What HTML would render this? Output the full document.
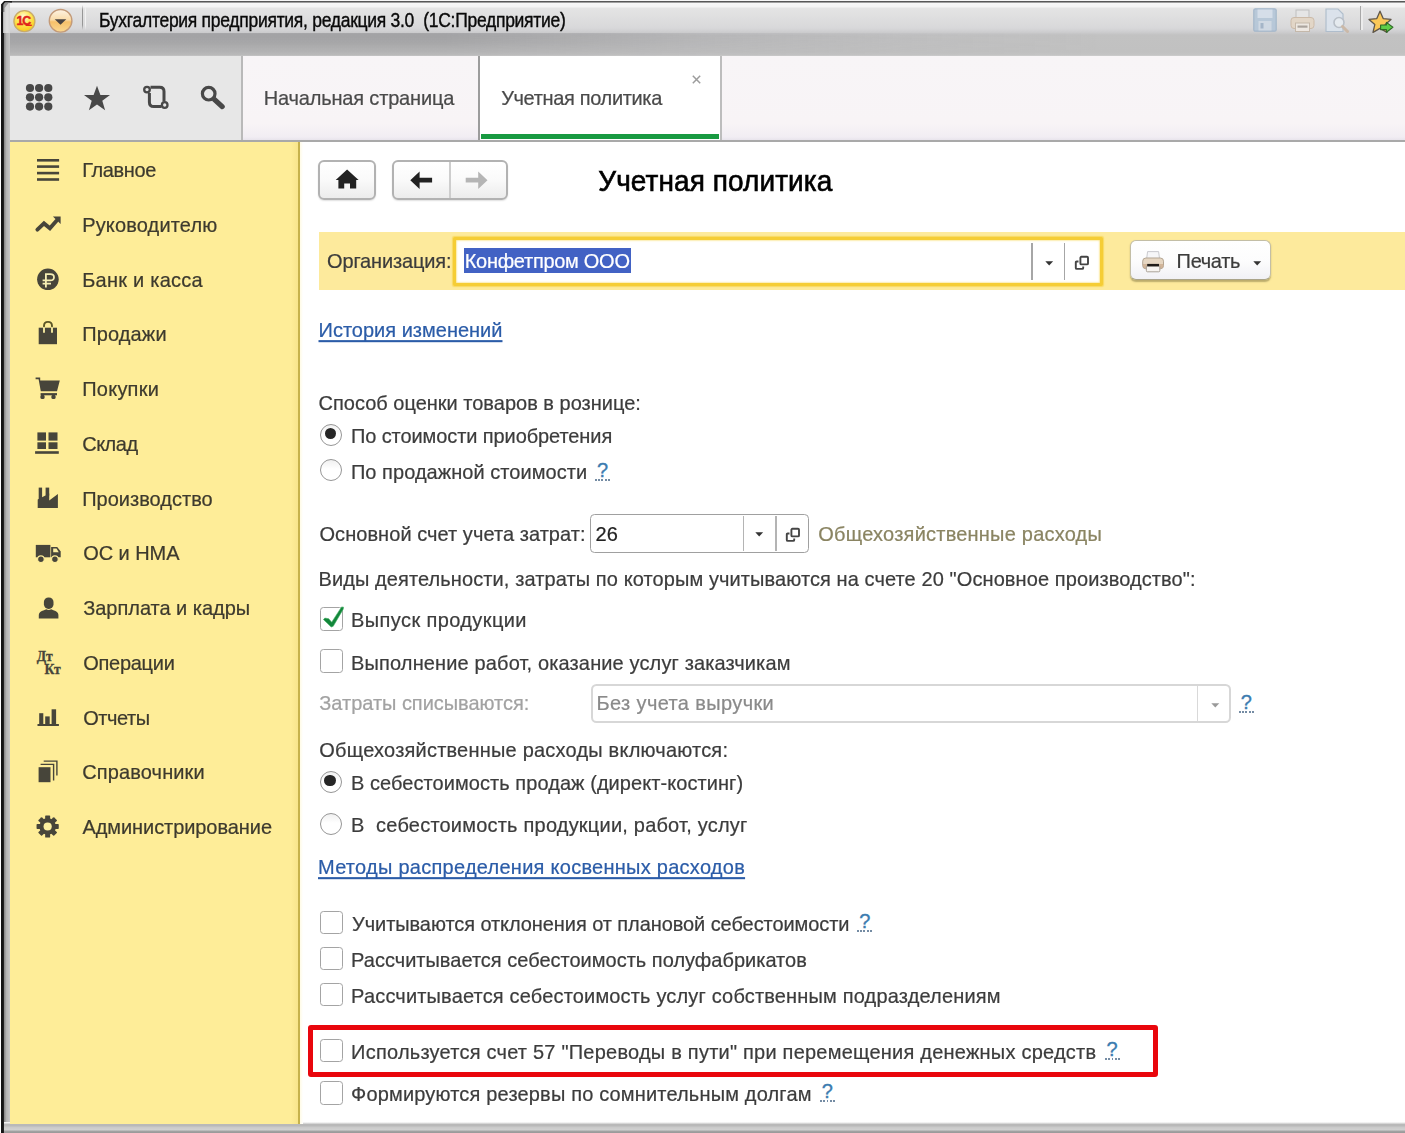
<!DOCTYPE html>
<html lang="ru">
<head>
<meta charset="utf-8">
<title>Учетная политика</title>
<style>
html,body{margin:0;padding:0;}
body{width:1405px;height:1133px;overflow:hidden;position:relative;background:#fff;font-family:"Liberation Sans",sans-serif;font-size:20px;color:#3c3c3c;}
.a{position:absolute;}
svg{position:absolute;overflow:visible;}
.t{position:absolute;white-space:nowrap;font-size:20px;line-height:24px;color:#3c3c3c;-webkit-text-stroke:0.22px currentColor;}
.lnk{text-decoration:underline;text-decoration-skip-ink:none;text-underline-offset:3px;text-decoration-thickness:2.3px;}
.qm{color:#3c7cb0;-webkit-text-stroke:0.35px #3c7cb0;}
.qd{width:15px;height:1.9px;background:repeating-linear-gradient(90deg,#758ca4 0,#758ca4 1.9px,transparent 1.9px,transparent 3.25px);}
.cb{position:absolute;width:23.5px;height:23.4px;border:1.8px solid #a4a4a4;border-radius:3.4px;background:#fff;box-sizing:border-box;}
.rb{position:absolute;width:22.1px;height:22.1px;border:1.9px solid #969696;border-radius:50%;background:linear-gradient(#f0f0f0,#ffffff 45%);box-sizing:border-box;}
.rb.on::after{content:"";position:absolute;left:3.4px;top:3.4px;width:11.5px;height:11.5px;border-radius:50%;background:#262626;}
.btn{position:absolute;box-sizing:border-box;border:2px solid #b2b2b2;border-radius:6px;background:linear-gradient(#ffffff,#fafafa 50%,#ececec);box-shadow:0 1px 1.5px rgba(0,0,0,.12);}
#h1{-webkit-text-stroke:0.6px #000;}
#wtitle{-webkit-text-stroke:0.35px #0a0a0a;}
</style>
</head>
<body>
<!-- ===== window frame / title bar ===== -->
<div class="a" id="titlebar" style="left:0;top:0;width:1405px;height:56px;background:linear-gradient(#f6f6f6 0px,#f6f6f6 0.9px,#555555 1.3px,#5e5e5e 2.2px,#f7f7f7 2.9px,#f4f4f4 6.5px,#e4e4e4 8.5px,#d8d8da 28px,#cdcdcf 32px,#c2c2c2 35px,#c1c1c1 52px,#c4c4c4 55px,#d0d0d0 56px);"></div>
<div class="a" id="titleshade" style="left:4px;top:33px;width:1401px;height:22.500px;background:linear-gradient(90deg,rgba(100,100,106,.34) 0,rgba(100,100,106,.34) 440px,rgba(120,120,130,.16) 700px,rgba(130,130,150,.05) 900px,rgba(130,130,150,0) 1100px);-webkit-mask-image:linear-gradient(#000 0,rgba(0,0,0,.85) 40%,rgba(0,0,0,.25) 100%);mask-image:linear-gradient(#000 0,rgba(0,0,0,.85) 40%,rgba(0,0,0,.25) 100%);"></div>
<div class="a" id="leftframe" style="left:0;top:0;width:10px;height:1133px;background:linear-gradient(90deg,#ffffff 0px,#ffffff 0.8px,#141414 1.4px,#141414 3.4px,#8a8a8a 4.4px,#b4b4b4 6.5px,#c6c6c6 10px);"></div>
<div class="a" id="leftframetop" style="left:3.400px;top:3px;width:7px;height:30px;background:linear-gradient(90deg,#a8a8a8 0,#cfcfcf 1.500px,#dedede 4px,rgba(225,225,225,.6) 7px);"></div>
<div class="a" id="bottomframe" style="left:3.500px;top:1122px;width:1402px;height:11px;background:linear-gradient(#ffffff 0px,#e4e4e4 1px,#b9b9b9 2.5px,#b9b9b9 4px,#c9c9c9 5px,#d1d1d1 8px,#a4a4a4 9px,#989898 11px);"></div>
<svg style="left:0;top:0;" width="12" height="12" viewBox="0 0 12 12"><path d="M0 0H12V1H4.500L1.200 4.500V12H0Z" fill="#fff"/><path d="M1.200 12V4.200L4.200 1.100H12V2.500H5L3.500 4.800V12Z" fill="#1c1c1c"/><path d="M3.500 12V4.800L5 2.500H9L4.500 8V12Z" fill="#8a8a8a" opacity=".8"/></svg>

<!-- 1C logo -->
<svg style="left:11px;top:8px;" width="27" height="27" viewBox="0 0 27 27">
<defs><radialGradient id="g1c" cx="45%" cy="30%" r="78%"><stop offset="0" stop-color="#fffce0"/><stop offset=".42" stop-color="#ffe85a"/><stop offset=".8" stop-color="#fbd024"/><stop offset="1" stop-color="#e6c84a"/></radialGradient></defs>
<circle cx="13.400" cy="13.200" r="10.500" fill="url(#g1c)" stroke="#c9ab6b" stroke-width="1.300"/>
<text x="5.600" y="17" font-family="Liberation Sans" font-weight="bold" font-size="12.300" fill="#e0251b" stroke="#e0251b" stroke-width=".5" letter-spacing="-1.100">1С</text>
<path d="M14.600 17.300H20.800" stroke="#e0251b" stroke-width="1.400"/>
</svg>
<!-- round dropdown button -->
<svg style="left:46px;top:6px;" width="29" height="29" viewBox="0 0 29 29">
<defs><linearGradient id="gdd" x1="0" y1="0" x2="0" y2="1"><stop offset="0" stop-color="#fdf3e4"/><stop offset=".45" stop-color="#fadcaa"/><stop offset=".55" stop-color="#f6c06a"/><stop offset="1" stop-color="#fad892"/></linearGradient></defs>
<circle cx="14.600" cy="14.800" r="11.300" fill="url(#gdd)" stroke="#c39a78" stroke-width="1.400"/>
<path d="M8.700 13.200H20.300L14.500 18.700Z" fill="#4a4442"/>
</svg>
<div class="a" style="left:81.800px;top:5px;width:1.600px;height:25px;background:linear-gradient(rgba(140,140,140,0),#969696 20%,#969696 80%,rgba(140,140,140,0));"></div>
<div class="a" style="left:84.800px;top:5px;width:1.500px;height:25px;background:linear-gradient(rgba(255,255,255,0),#f2f2f2 20%,#f2f2f2 80%,rgba(255,255,255,0));"></div>

<!-- title bar right icons (disabled look) -->
<svg style="left:1253px;top:8px;opacity:.9" width="24" height="24" viewBox="0 0 24 24">
<rect x=".8" y=".8" width="22.400" height="22.400" rx="1.500" fill="#b4c6d8" stroke="#9fb4c9" stroke-width="1.200"/>
<rect x="4.500" y="1.500" width="15" height="8.500" fill="#d4deea"/><rect x="5.500" y="13" width="13" height="9.500" fill="#cfd9e4"/><rect x="7.500" y="15" width="3" height="5.500" fill="#9fb2c6"/>
</svg>
<svg style="left:1290px;top:9px;opacity:.95" width="25" height="24" viewBox="0 0 25 24">
<rect x="6" y="1" width="13" height="9" fill="#e6e6e6" stroke="#bdbdbd" stroke-width="1"/>
<rect x="1" y="8.500" width="23" height="11" rx="3" fill="#e3d6c6" stroke="#cbb9a6" stroke-width="1"/>
<rect x="5.500" y="14" width="14" height="8.500" fill="#efe9e2" stroke="#c4b7a8" stroke-width="1"/>
<rect x="7.500" y="16.500" width="10" height="2.200" fill="#a9a29a"/>
</svg>
<svg style="left:1325px;top:8px;opacity:.95" width="24" height="25" viewBox="0 0 24 25">
<path d="M1 1H13L18 6V23.500H1Z" fill="#dbe3ec" stroke="#aebdcc" stroke-width="1.200"/>
<circle cx="14" cy="14.500" r="5" fill="#e6ebf0" stroke="#b7bec6" stroke-width="1.600"/>
<path d="M17.500 18.500L22.500 23.500" stroke="#cbb8a6" stroke-width="3" stroke-linecap="round"/>
</svg>
<div class="a" style="left:1359.500px;top:6px;width:1.500px;height:24px;background:#a8a8a8;"></div>
<div class="a" style="left:1361px;top:6px;width:1.500px;height:24px;background:#ececec;"></div>
<svg style="left:1368px;top:10px;" width="27" height="25" viewBox="0 0 27 25">
<path d="M12 1.200L15.200 8.600L23 9.400L17.200 14.600L19 22.400L12 18.400L5 22.400L6.800 14.600L1 9.400L8.800 8.600Z" fill="#fbc858" stroke="#5e564a" stroke-width="1.300" stroke-linejoin="round"/>
<path d="M12.600 15H18.400V12.400L24.900 17.300L18.400 22.200V19.600H12.600Z" fill="#5fce48" stroke="#2f6a26" stroke-width="1.100" stroke-linejoin="round"/>
</svg>

<!-- ===== tab bar ===== -->
<div class="a" id="tabbar" style="left:10px;top:56px;width:1395px;height:84px;background:linear-gradient(#f8f5f7 0,#f8f4f6 68px,#f1edf3 81px,#e8e4ec 84px);"></div>
<div class="a" style="left:10px;top:56px;width:231px;height:84px;background:#e7e7e7;"></div>
<div class="a" style="left:241px;top:56px;width:1.600px;height:84px;background:#b9b9b9;"></div>
<div class="a" style="left:478.300px;top:56px;width:1.700px;height:84px;background:#9c9c9c;"></div>
<div class="a" id="tabactive" style="left:480.400px;top:56px;width:239.600px;height:84px;background:#fff;"></div>
<div class="a" style="left:720px;top:56px;width:1.600px;height:84px;background:#bdbdbd;"></div>
<div class="a" style="left:480.700px;top:134.400px;width:238px;height:4.200px;background:#189a41;"></div>
<div class="a" style="left:10px;top:139.800px;width:1395px;height:1.800px;background:#a9a9a9;"></div>
<svg style="left:691.500px;top:74.500px;" width="9" height="9" viewBox="0 0 9 9"><path d="M.8.8L8.200 8.200M8.200.8L.8 8.200" stroke="#9c9c9c" stroke-width="1.500"/></svg>

<!-- tab bar icons -->
<svg style="left:25px;top:83px;" width="29" height="29" viewBox="0 0 29 29" fill="#484848">
<circle cx="5" cy="5" r="4.100"/><circle cx="14.100" cy="5" r="4.100"/><circle cx="23.300" cy="5" r="4.100"/>
<circle cx="5" cy="14.300" r="4.100"/><circle cx="14.100" cy="14.300" r="4.100"/><circle cx="23.300" cy="14.300" r="4.100"/>
<circle cx="5" cy="23.600" r="4.100"/><circle cx="14.100" cy="23.600" r="4.100"/><circle cx="23.300" cy="23.600" r="4.100"/>
</svg>
<svg style="left:83px;top:85px;" width="28" height="27" viewBox="0 0 28 27"><path d="M14 .8L17.400 9.900H27L19.300 15.700L22.100 25.200L14 19.600L5.900 25.200L8.700 15.700L1 9.900H10.600Z" fill="#484848"/></svg>
<svg style="left:142px;top:84px;" width="28" height="27" viewBox="0 0 28 27" fill="none" stroke="#484848" stroke-width="3">
<path d="M7.400 9V18.300Q7.400 22.600 11.700 22.600H19.500"/>
<path d="M8.500 3.300H17.700Q22 3.300 22 7.600V17.500"/>
<circle cx="5" cy="5.600" r="2.800" fill="#e7e7e7" stroke-width="2.300"/>
<circle cx="22.700" cy="21" r="2.800" fill="#e7e7e7" stroke-width="2.300"/>
</svg>
<svg style="left:199px;top:84px;" width="28" height="27" viewBox="0 0 28 27" fill="none" stroke="#484848">
<circle cx="9.700" cy="9.700" r="6.300" stroke-width="3.200"/><path d="M15.300 15.300L23.200 22.600" stroke-width="5.200" stroke-linecap="round"/>
</svg>

<!-- ===== sidebar ===== -->
<div class="a" id="sidebar" style="left:10px;top:141.600px;width:288px;height:982px;background:linear-gradient(90deg,#feed98 0,#feed98 281px,#f8e58c 288px);"></div>
<div class="a" style="left:297.600px;top:141.600px;width:2px;height:982px;background:#c6b24c;"></div>
<div class="a" style="left:299.600px;top:141.600px;width:3px;height:982px;background:linear-gradient(90deg,#fffbe6,#ffffff);"></div>

<!-- 0 Главное -->
<svg style="left:36.800px;top:158.900px;" width="23" height="22" viewBox="0 0 23 22" fill="#47453a"><rect x="0" y="0" width="22.100" height="2.600"/><rect x="0" y="6.300" width="22.100" height="2.600"/><rect x="0" y="12.800" width="22.100" height="2.600"/><rect x="0" y="19.200" width="22.100" height="2.600"/></svg>
<!-- 1 Руководителю -->
<svg style="left:35px;top:216px;" width="27" height="16" viewBox="0 0 27 16"><path d="M2.400 13.700L9 7.400L14.900 12.200L21.500 4.800" fill="none" stroke="#47453a" stroke-width="3.900" stroke-linejoin="miter" stroke-linecap="round"/><path d="M17.900 .6H25.600V8Z" fill="#47453a"/></svg>
<!-- 2 Банк и касса -->
<svg style="left:36px;top:267.500px;" width="23" height="23" viewBox="0 0 23 23"><circle cx="11.900" cy="11.300" r="10.800" fill="#47453a"/><path d="M9.900 19.400V6.200H14.300Q18 6.200 18 9.300T14.300 12.400H6.600M6.600 15.700H15" fill="none" stroke="#f5eeb4" stroke-width="1.800"/></svg>
<!-- 3 Продажи -->
<svg style="left:38px;top:321px;" width="21" height="24" viewBox="0 0 21 24"><path d="M.7 6.700H19V23.200H.7Z" fill="#47453a"/><path d="M6 7V5Q6 .9 10 .9T14 5V7" fill="none" stroke="#5c5626" stroke-width="1.900"/><path d="M6 6.700V11M14 6.700V11" stroke="#f5eaa0" stroke-width="1.900" stroke-linecap="round"/></svg>
<!-- 4 Покупки -->
<svg style="left:35px;top:377px;" width="26" height="23" viewBox="0 0 26 23" fill="#47453a"><path d="M.6 .4H5.200V3.500H24.800L22 14.200H5.800L3.600 2.300H.6Z"/><rect x="5.600" y="16.100" width="16.400" height="2.200"/><rect x="5.400" y="17.800" width="4.200" height="4.300" rx="1.600"/><rect x="16.400" y="17.800" width="4.200" height="4.300" rx="1.600"/></svg>
<!-- 5 Склад -->
<svg style="left:35px;top:432px;" width="24" height="23" viewBox="0 0 24 23" fill="#47453a"><rect x="2.400" y=".4" width="8.600" height="8.200"/><rect x="13.500" y=".4" width="9" height="8.200"/><rect x="2.400" y="10.300" width="8.600" height="6.700"/><rect x="13.500" y="10.300" width="9" height="6.700"/><rect x=".1" y="19.200" width="23.700" height="2.600"/></svg>
<!-- 6 Производство -->
<svg style="left:37px;top:487px;" width="22" height="22" viewBox="0 0 22 22" fill="#47453a"><rect x="1.700" y=".6" width="3.400" height="12"/><rect x="8.600" y=".6" width="3.600" height="8"/><path d="M.7 21.100V12.500L12.200 6.500V13.400L20.900 7V21.100Z"/></svg>
<!-- 7 ОС и НМА -->
<svg style="left:35px;top:544px;" width="27" height="19" viewBox="0 0 27 19"><path d="M.8 .9H15.400V13.300H.8Z" fill="#47453a"/><path d="M16.100 3H22.200L25.700 7.400V13.300H16.100Z" fill="#47453a"/><path d="M18.200 4.400H21.500L23.800 8.200H18.200Z" fill="#fbeea0"/><circle cx="5.900" cy="15.200" r="3.300" fill="#47453a" stroke="#feed98" stroke-width="1.100"/><circle cx="19.900" cy="15.200" r="3.300" fill="#47453a" stroke="#feed98" stroke-width="1.100"/></svg>
<!-- 8 Зарплата -->
<svg style="left:37.500px;top:596.500px;" width="22" height="22" viewBox="0 0 22 22" fill="#47453a"><rect x="5.900" y=".5" width="9.600" height="11.400" rx="4.600"/><path d="M.8 21.400V17.800Q1.100 14.600 6 13.300L8.200 12.200Q10.700 13.800 13.200 12.200L15.400 13.300Q20.100 14.600 20.400 17.800V21.400Z"/></svg>
<!-- 9 Операции -->
<div class="a" style="left:36.800px;top:650px;font-family:'Liberation Serif',serif;font-weight:bold;font-size:13.600px;line-height:13px;color:#47453a;letter-spacing:-0.2px;-webkit-text-stroke:0.300px #47453a;white-space:nowrap;">Дт</div>
<div class="a" style="left:44.600px;top:662.500px;font-family:'Liberation Serif',serif;font-weight:bold;font-size:13.600px;line-height:13px;color:#47453a;letter-spacing:-0.2px;-webkit-text-stroke:0.300px #47453a;white-space:nowrap;">Кт</div>
<!-- 10 Отчеты -->
<svg style="left:36.500px;top:708.500px;" width="23" height="18" viewBox="0 0 23 18" fill="#47453a"><rect x="2.200" y="4.200" width="4.100" height="11.500"/><rect x="8.200" y="7.400" width="4.500" height="8.500"/><rect x="14.600" y=".3" width="4.500" height="15.500"/><rect x=".5" y="15" width="21.400" height="2"/></svg>
<!-- 11 Справочники -->
<svg style="left:38px;top:760px;" width="21" height="23" viewBox="0 0 21 23"><rect x=".6" y="7.200" width="11.900" height="15" fill="#47453a"/><path d="M2.600 4.400H15.600V20.500M5.700 1.100H18.900V15.600" fill="none" stroke="#47453a" stroke-width="1.400"/></svg>
<!-- 12 Администрирование -->
<svg style="left:36px;top:814.800px;" width="24" height="24" viewBox="0 0 24 24"><g transform="translate(11.650 11.500)" fill="#47453a"><circle r="8.300"/><rect x="-2.500" y="-11.100" width="5" height="4.500" rx=".7" transform="rotate(0)"/><rect x="-2.500" y="-11.100" width="5" height="4.500" rx=".7" transform="rotate(45)"/><rect x="-2.500" y="-11.100" width="5" height="4.500" rx=".7" transform="rotate(90)"/><rect x="-2.500" y="-11.100" width="5" height="4.500" rx=".7" transform="rotate(135)"/><rect x="-2.500" y="-11.100" width="5" height="4.500" rx=".7" transform="rotate(180)"/><rect x="-2.500" y="-11.100" width="5" height="4.500" rx=".7" transform="rotate(225)"/><rect x="-2.500" y="-11.100" width="5" height="4.500" rx=".7" transform="rotate(270)"/><rect x="-2.500" y="-11.100" width="5" height="4.500" rx=".7" transform="rotate(315)"/><circle r="4.100" fill="#fdf0a0"/></g></svg>
<!-- ===== main content : toolbar ===== -->
<div class="btn" style="left:318px;top:160px;width:58px;height:39.500px;"></div>
<div class="btn" style="left:391.600px;top:160px;width:116px;height:39.500px;"></div>
<div class="a" style="left:449.300px;top:162px;width:1.400px;height:35.500px;background:#cdcdcd;"></div>
<svg style="left:335px;top:169px;" width="25" height="20" viewBox="0 0 25 20"><path d="M12.100 .5L23.600 10.900H21.200V19.400H15V14.600H9.200V19.400H3.400V10.900H.7Z" fill="#222"/></svg>
<svg style="left:410px;top:170.500px;" width="23" height="19" viewBox="0 0 23 19"><path d="M.3 9.200L9.600 .4V6.800H22.100V11.600H9.600V18Z" fill="#222"/></svg>
<svg style="left:464.500px;top:170.500px;" width="23" height="19" viewBox="0 0 23 19"><path d="M22.500 9.200L13.200 .4V6.800H.7V11.600H13.200V18Z" fill="#b5b5b5"/></svg>

<!-- organisation band -->
<div class="a" id="orgband" style="left:318.600px;top:232.400px;width:1087px;height:58px;background:#fdea9c;"></div>
<div class="a" id="orginput" style="left:452.600px;top:236.800px;width:650.400px;height:48.800px;box-sizing:border-box;border:3.300px solid #f5cd35;background:#fff;border-radius:2px;box-shadow:0 0 1.200px 0.300px #f9d95e, inset 0 0 1.600px 0.600px #f9e07a;"></div>
<div class="a" id="sel" style="left:464px;top:248px;width:167px;height:24.500px;background:#4262c4;"></div>
<div class="a" style="left:1031.200px;top:243px;width:1.400px;height:36.500px;background:#a6a6a6;"></div>
<div class="a" style="left:1064px;top:243px;width:1.400px;height:36.500px;background:#a6a6a6;"></div>
<svg style="left:1045px;top:260.800px;" width="9" height="5" viewBox="0 0 9 5"><path d="M.3 .2H8.100L4.200 4.400Z" fill="#333"/></svg>
<svg style="left:1074px;top:255px;" width="16" height="16" viewBox="0 0 16 16" fill="none" stroke="#444" stroke-width="1.900"><rect x="6.400" y="1.800" width="7.600" height="7.600" rx="1"/><path d="M4.500 6.500H2.800Q1.800 6.500 1.800 7.500V12.900Q1.800 13.900 2.800 13.900H8.200Q9.200 13.900 9.200 12.900V11.400"/></svg>

<div class="btn" style="left:1130.400px;top:240.400px;width:140.800px;height:39.600px;border:1.500px solid #c3bea6;border-bottom-color:#aaa48a;background:linear-gradient(#ffffff,#fcfcfd 55%,#f1f1f5);box-shadow:0 1.500px 1.500px rgba(95,85,40,.42);"></div>
<svg style="left:1142px;top:250.500px;" width="23" height="22" viewBox="0 0 23 22">
<path d="M5.600 .6H16.600L17.600 8H4.600Z" fill="#f6f6f8" stroke="#c4c4c8" stroke-width=".9"/>
<rect x=".7" y="7" width="20.800" height="10.800" rx="3.200" fill="#e6d6c2" stroke="#b3a593" stroke-width="1"/>
<path d="M.9 13H21.300V14.600Q21.300 17.600 18.300 17.600H3.900Q.9 17.600 .9 14.600Z" fill="#c9a98c" opacity=".75"/>
<rect x="4.400" y="14.800" width="13.400" height="6" rx="1" fill="#f7f4f0" stroke="#a39a8e" stroke-width=".9"/>
<rect x="5.200" y="12.900" width="11.800" height="2.500" fill="#1f1b18"/>
</svg>
<svg style="left:1252.600px;top:260.800px;" width="9" height="5" viewBox="0 0 9 5"><path d="M.3 .2H8.100L4.200 4.400Z" fill="#333"/></svg>

<!-- radios group 1 -->
<div class="rb on" style="left:320.200px;top:423.600px;"></div>
<div class="rb" style="left:320.200px;top:459.300px;"></div>

<!-- account input -->
<div class="a" style="left:590.300px;top:514px;width:218.500px;height:38.500px;box-sizing:border-box;border:1.800px solid #a0a0a0;border-radius:4.500px;background:#fff;"></div>
<div class="a" style="left:742.500px;top:515.500px;width:1.300px;height:35.500px;background:#b4b4b4;"></div>
<div class="a" style="left:775.300px;top:515.500px;width:1.300px;height:35.500px;background:#b4b4b4;"></div>
<svg style="left:755.200px;top:531.500px;" width="9" height="5" viewBox="0 0 9 5"><path d="M.3 .2H8.100L4.200 4.400Z" fill="#333"/></svg>
<svg style="left:784.500px;top:527px;" width="16" height="16" viewBox="0 0 16 16" fill="none" stroke="#444" stroke-width="1.900"><rect x="6.400" y="1.800" width="7.600" height="7.600" rx="1"/><path d="M4.500 6.500H2.800Q1.800 6.500 1.800 7.500V12.900Q1.800 13.900 2.800 13.900H8.200Q9.200 13.900 9.200 12.900V11.400"/></svg>

<!-- checkboxes 1,2 -->
<div class="cb" style="left:319.800px;top:607.200px;"></div>
<svg style="left:320px;top:604px;" width="26" height="26" viewBox="0 0 26 26"><path d="M3.400 15.500L4.900 14.100L8.700 14.700L11.700 18.200L21.600 2.900L23.600 3.200L23.200 5.200L13.200 22.300L11.200 23Z" fill="#12863a" stroke="#3fae62" stroke-width=".6" stroke-linejoin="round"/></svg>
<div class="cb" style="left:319.800px;top:649.300px;"></div>

<!-- disabled select -->
<div class="a" style="left:590.800px;top:683.800px;width:640.200px;height:39.200px;box-sizing:border-box;border:2px solid #d7d7d7;border-radius:5.500px;background:#fff;"></div>
<div class="a" style="left:1196.800px;top:685.500px;width:1.500px;height:35.800px;background:#d9d9d9;"></div>
<svg style="left:1210.500px;top:702.900px;" width="9" height="5" viewBox="0 0 9 5"><path d="M.3 .2H8.300L4.300 4.400Z" fill="#9a9a9a"/></svg>

<!-- radios group 2 -->
<div class="rb on" style="left:320px;top:770.500px;"></div>
<div class="rb" style="left:320px;top:813px;"></div>

<!-- checkboxes 3..7 -->
<div class="cb" style="left:319.900px;top:910.700px;"></div>
<div class="cb" style="left:319.900px;top:946.900px;"></div>
<div class="cb" style="left:319.900px;top:982.800px;"></div>
<div class="a" id="redbox" style="left:307.900px;top:1024.900px;width:850.100px;height:52.100px;box-sizing:border-box;border:5px solid #e9060c;border-radius:3px;"></div>
<div class="cb" style="left:319.900px;top:1038.800px;"></div>
<div class="cb" style="left:319.900px;top:1081.200px;"></div>

<!-- text -->
<div class="t " id="wtitle" style="left:99.00px;top:11.20px;font-size:17.5px;line-height:21px;letter-spacing:-0.277px;color:#0a0a0a;transform:scaleY(1.11);transform-origin:0 16px;">Бухгалтерия предприятия, редакция 3.0&nbsp; (1С:Предприятие)</div>
<div class="t " id="tab1" style="left:263.80px;top:86.30px;font-size:20px;line-height:24px;letter-spacing:-0.176px;color:#4a4a4a;transform:scaleY(1.04);transform-origin:0 19px;">Начальная страница</div>
<div class="t " id="tab2" style="left:501.20px;top:86.30px;font-size:20px;line-height:24px;letter-spacing:-0.345px;color:#4a4a4a;transform:scaleY(1.04);transform-origin:0 19px;">Учетная политика</div>
<div class="t " id="h1" style="left:598.30px;top:165.40px;font-size:28px;line-height:34px;letter-spacing:0.077px;color:#000;transform:scaleY(1.05);transform-origin:0 26px;">Учетная политика</div>
<div class="t " id="org" style="left:327.00px;top:248.70px;font-size:20px;line-height:24px;letter-spacing:-0.148px;color:#3c3c3c;transform:scaleY(1.04);transform-origin:0 19px;">Организация:</div>
<div class="t " id="orgv" style="left:464.70px;top:248.50px;font-size:20px;line-height:24px;letter-spacing:-0.284px;color:#fff;transform:scaleY(1.04);transform-origin:0 19px;">Конфетпром ООО</div>
<div class="t " id="print" style="left:1176.60px;top:249.40px;font-size:20px;line-height:24px;letter-spacing:-0.340px;color:#3c3c3c;transform:scaleY(1.04);transform-origin:0 19px;">Печать</div>
<div class="t lnk" id="hist" style="left:318.50px;top:317.60px;font-size:20px;line-height:24px;letter-spacing:0.005px;color:#2b5ca8;transform:scaleY(1.04);transform-origin:0 19px;">История изменений</div>
<div class="t " id="l1" style="left:318.50px;top:391.00px;font-size:20px;line-height:24px;letter-spacing:0.003px;color:#3c3c3c;transform:scaleY(1.04);transform-origin:0 19px;">Способ оценки товаров в рознице:</div>
<div class="t " id="r1" style="left:350.90px;top:423.80px;font-size:20px;line-height:24px;letter-spacing:-0.088px;color:#3c3c3c;transform:scaleY(1.04);transform-origin:0 19px;">По стоимости приобретения</div>
<div class="t " id="r2" style="left:350.90px;top:460.20px;font-size:20px;line-height:24px;letter-spacing:0.051px;color:#3c3c3c;transform:scaleY(1.04);transform-origin:0 19px;">По продажной стоимости</div>
<div class="t " id="l2" style="left:319.50px;top:522.10px;font-size:20px;line-height:24px;letter-spacing:0.054px;color:#3c3c3c;transform:scaleY(1.04);transform-origin:0 19px;">Основной счет учета затрат:</div>
<div class="t " id="v26" style="left:595.50px;top:522.00px;font-size:20px;line-height:24px;letter-spacing:0.077px;color:#222;transform:scaleY(1.04);transform-origin:0 19px;">26</div>
<div class="t " id="oh" style="left:818.30px;top:522.00px;font-size:20px;line-height:24px;letter-spacing:0.218px;color:#8a8462;transform:scaleY(1.04);transform-origin:0 19px;">Общехозяйственные расходы</div>
<div class="t " id="l3" style="left:318.50px;top:567.40px;font-size:20px;line-height:24px;letter-spacing:0.096px;color:#3c3c3c;transform:scaleY(1.04);transform-origin:0 19px;">Виды деятельности, затраты по которым учитываются на счете 20 &quot;Основное производство&quot;:</div>
<div class="t " id="c1" style="left:351.10px;top:608.00px;font-size:20px;line-height:24px;letter-spacing:0.393px;color:#3c3c3c;transform:scaleY(1.04);transform-origin:0 19px;">Выпуск продукции</div>
<div class="t " id="c2" style="left:351.10px;top:650.80px;font-size:20px;line-height:24px;letter-spacing:0.136px;color:#3c3c3c;transform:scaleY(1.04);transform-origin:0 19px;">Выполнение работ, оказание услуг заказчикам</div>
<div class="t " id="l4" style="left:319.30px;top:691.00px;font-size:20px;line-height:24px;letter-spacing:-0.029px;color:#a2a2a2;transform:scaleY(1.04);transform-origin:0 19px;">Затраты списываются:</div>
<div class="t " id="v4" style="left:596.50px;top:691.30px;font-size:20px;line-height:24px;letter-spacing:0.375px;color:#8a8a8a;transform:scaleY(1.04);transform-origin:0 19px;">Без учета выручки</div>
<div class="t " id="l5" style="left:319.30px;top:738.30px;font-size:20px;line-height:24px;letter-spacing:0.208px;color:#3c3c3c;transform:scaleY(1.04);transform-origin:0 19px;">Общехозяйственные расходы включаются:</div>
<div class="t " id="r3" style="left:351.00px;top:771.20px;font-size:20px;line-height:24px;letter-spacing:0.061px;color:#3c3c3c;transform:scaleY(1.04);transform-origin:0 19px;">В себестоимость продаж (директ-костинг)</div>
<div class="t " id="r4" style="left:351.00px;top:813.30px;font-size:20px;line-height:24px;letter-spacing:0.210px;color:#3c3c3c;transform:scaleY(1.04);transform-origin:0 19px;">В&nbsp; себестоимость продукции, работ, услуг</div>
<div class="t lnk" id="meth" style="left:318.00px;top:855.10px;font-size:20px;line-height:24px;letter-spacing:0.265px;color:#2b5ca8;transform:scaleY(1.04);transform-origin:0 19px;">Методы распределения косвенных расходов</div>
<div class="t " id="c3" style="left:352.10px;top:912.00px;font-size:20px;line-height:24px;letter-spacing:-0.077px;color:#3c3c3c;transform:scaleY(1.04);transform-origin:0 19px;">Учитываются отклонения от плановой себестоимости</div>
<div class="t " id="c4" style="left:351.10px;top:948.00px;font-size:20px;line-height:24px;letter-spacing:0.009px;color:#3c3c3c;transform:scaleY(1.04);transform-origin:0 19px;">Рассчитывается себестоимость полуфабрикатов</div>
<div class="t " id="c5" style="left:351.10px;top:983.50px;font-size:20px;line-height:24px;letter-spacing:0.166px;color:#3c3c3c;transform:scaleY(1.04);transform-origin:0 19px;">Рассчитывается себестоимость услуг собственным подразделениям</div>
<div class="t " id="c6" style="left:351.10px;top:1039.80px;font-size:20px;line-height:24px;letter-spacing:0.224px;color:#3c3c3c;transform:scaleY(1.04);transform-origin:0 19px;">Используется счет 57 &quot;Переводы в пути&quot; при перемещения денежных средств</div>
<div class="t " id="c7" style="left:351.10px;top:1082.00px;font-size:20px;line-height:24px;letter-spacing:0.167px;color:#3c3c3c;transform:scaleY(1.04);transform-origin:0 19px;">Формируются резервы по сомнительным долгам</div>
<div class="t " id="m0" style="left:82.20px;top:158.10px;font-size:20px;line-height:24px;letter-spacing:-0.365px;color:#3d3a2e;transform:scaleY(1.04);transform-origin:0 19px;">Главное</div>
<div class="t " id="m1" style="left:82.20px;top:212.84px;font-size:20px;line-height:24px;letter-spacing:0.152px;color:#3d3a2e;transform:scaleY(1.04);transform-origin:0 19px;">Руководителю</div>
<div class="t " id="m2" style="left:82.20px;top:267.58px;font-size:20px;line-height:24px;letter-spacing:0.242px;color:#3d3a2e;transform:scaleY(1.04);transform-origin:0 19px;">Банк и касса</div>
<div class="t " id="m3" style="left:82.20px;top:322.32px;font-size:20px;line-height:24px;letter-spacing:0.141px;color:#3d3a2e;transform:scaleY(1.04);transform-origin:0 19px;">Продажи</div>
<div class="t " id="m4" style="left:82.20px;top:377.06px;font-size:20px;line-height:24px;letter-spacing:0.241px;color:#3d3a2e;transform:scaleY(1.04);transform-origin:0 19px;">Покупки</div>
<div class="t " id="m5" style="left:82.20px;top:431.80px;font-size:20px;line-height:24px;letter-spacing:-0.503px;color:#3d3a2e;transform:scaleY(1.04);transform-origin:0 19px;">Склад</div>
<div class="t " id="m6" style="left:82.20px;top:486.54px;font-size:20px;line-height:24px;letter-spacing:0.011px;color:#3d3a2e;transform:scaleY(1.04);transform-origin:0 19px;">Производство</div>
<div class="t " id="m7" style="left:83.20px;top:541.28px;font-size:20px;line-height:24px;letter-spacing:-0.056px;color:#3d3a2e;transform:scaleY(1.04);transform-origin:0 19px;">ОС и НМА</div>
<div class="t " id="m8" style="left:83.20px;top:596.02px;font-size:20px;line-height:24px;letter-spacing:-0.024px;color:#3d3a2e;transform:scaleY(1.04);transform-origin:0 19px;">Зарплата и кадры</div>
<div class="t " id="m9" style="left:83.20px;top:650.76px;font-size:20px;line-height:24px;letter-spacing:-0.269px;color:#3d3a2e;transform:scaleY(1.04);transform-origin:0 19px;">Операции</div>
<div class="t " id="m10" style="left:83.20px;top:705.50px;font-size:20px;line-height:24px;letter-spacing:-0.451px;color:#3d3a2e;transform:scaleY(1.04);transform-origin:0 19px;">Отчеты</div>
<div class="t " id="m11" style="left:82.20px;top:760.24px;font-size:20px;line-height:24px;letter-spacing:0.131px;color:#3d3a2e;transform:scaleY(1.04);transform-origin:0 19px;">Справочники</div>
<div class="t " id="m12" style="left:82.40px;top:814.98px;font-size:20px;line-height:24px;letter-spacing:-0.068px;color:#3d3a2e;transform:scaleY(1.04);transform-origin:0 19px;">Администрирование</div>
<div class="t qm" id="q1" style="left:596.95px;top:457.70px;">?</div>
<div class="a qd" style="left:594.95px;top:478.70px;"></div>
<div class="t qm" id="q2" style="left:1240.65px;top:690.40px;">?</div>
<div class="a qd" style="left:1238.65px;top:711.40px;"></div>
<div class="t qm" id="q3" style="left:859.35px;top:908.90px;">?</div>
<div class="a qd" style="left:857.35px;top:929.90px;"></div>
<div class="t qm" id="q4" style="left:1106.50px;top:1037.20px;">?</div>
<div class="a qd" style="left:1104.50px;top:1058.20px;"></div>
<div class="t qm" id="q5" style="left:821.85px;top:1079.30px;">?</div>
<div class="a qd" style="left:819.85px;top:1100.30px;"></div>
</body>
</html>
